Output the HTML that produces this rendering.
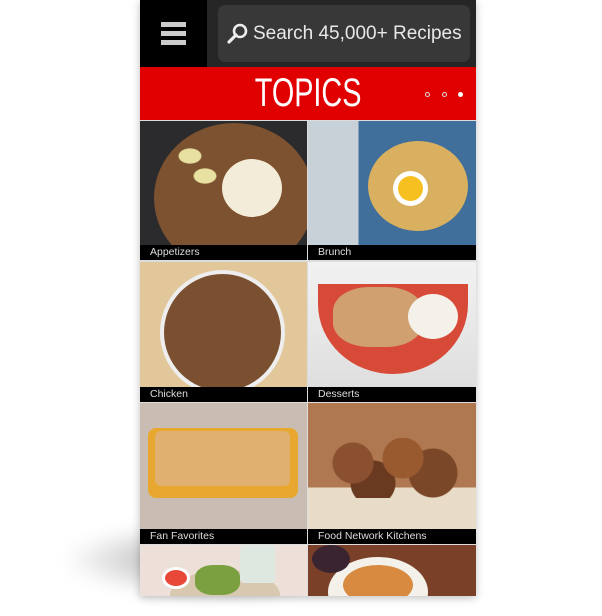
<!DOCTYPE html>
<html><head><style>
*{margin:0;padding:0;box-sizing:border-box}
body{width:602px;height:616px;background:#fff;position:relative;overflow:hidden;font-family:"Liberation Sans",sans-serif}
.shadow{position:absolute;left:60px;top:520px;width:260px;height:80px;border-radius:50%;background:radial-gradient(ellipse at 70% 50%,rgba(0,0,0,.45),rgba(0,0,0,0) 70%);filter:blur(8px)}
.screen{position:absolute;left:140px;top:0;width:336px;height:596px;background:#ddd;overflow:hidden;box-shadow:0 2px 8px rgba(0,0,0,.25)}
.hdr{position:absolute;left:0;top:0;width:336px;height:67px;background:#262626}
.ham{position:absolute;left:0;top:0;width:67px;height:67px;background:#000}
.ham i{position:absolute;left:21px;width:25px;height:5px;background:#ccc}
.search{position:absolute;left:78px;top:5px;width:252px;height:57px;border-radius:7px;background:#383838;color:#e8e8e8;font-size:19px;line-height:57px;padding-left:35px}
.red{position:absolute;left:0;top:67px;width:336px;height:53px;background:#e10000;text-align:center;color:#fff;font-family:"Liberation Sans Narrow","Liberation Sans",sans-serif;font-size:40px;line-height:53px}
.red span{display:inline-block;transform:scaleX(.72)}
.dot{position:absolute;top:92px;width:5px;height:5px;border-radius:50%}
.tile{position:absolute;width:167px;overflow:hidden}
.lab{position:absolute;left:0;bottom:0;width:100%;height:15px;background:#000;color:#ddd;font-size:10.5px;line-height:15px;padding-left:10px}
</style></head><body>
<div class="shadow"></div>
<div class="screen">
<div class="hdr"></div>
<div class="ham"><i style="top:22px"></i><i style="top:31px"></i><i style="top:40px"></i></div>
<div class="search">Search 45,000+ Recipes
<svg style="position:absolute;left:9px;top:18px" width="22" height="22" viewBox="0 0 22 22"><circle cx="13" cy="8" r="6" fill="none" stroke="#eee" stroke-width="2.6"/><line x1="9" y1="12" x2="2" y2="19" stroke="#eee" stroke-width="3.2" stroke-linecap="round"/></svg></div>
<div class="red"><span>TOPICS</span></div>
<div class="dot" style="left:285px;border:1px solid #ddd"></div>
<div class="dot" style="left:302px;border:1px solid #ddd"></div>
<div class="dot" style="left:318px;background:#fff"></div>

<div class="tile" style="left:0;top:121px;height:139px;background:#2b2b2d">
<div style="position:absolute;left:14px;top:2px;width:160px;height:150px;border-radius:50%;background:#7d5230"></div>
<div style="position:absolute;left:82px;top:38px;width:60px;height:58px;border-radius:50%;background:#f2ecd8"></div>
<div style="position:absolute;left:30px;top:15px;width:50px;height:60px;background:radial-gradient(ellipse 12px 8px at 20px 20px,#e8e0a0 90%,transparent),radial-gradient(ellipse 12px 8px at 35px 40px,#e8e0a0 90%,transparent)"></div>
<div class="lab">Appetizers</div></div>
<div class="tile" style="left:168px;top:121px;height:139px;width:168px;background:linear-gradient(90deg,#c8d0d8 0 30%,#3f6f9a 30%)">
<div style="position:absolute;left:60px;top:20px;width:100px;height:90px;border-radius:50%;background:#d8b060"></div>
<div style="position:absolute;left:90px;top:55px;width:25px;height:25px;border-radius:50%;background:#f6c020;box-shadow:0 0 0 5px #fff"></div>
<div class="lab">Brunch</div></div>

<div class="tile" style="left:0;top:262px;height:140px;background:#e2c79a">
<div style="position:absolute;left:20px;top:8px;width:125px;height:125px;border-radius:50%;background:#7a5030;border:4px solid #eee"></div>
<div class="lab">Chicken</div></div>
<div class="tile" style="left:168px;top:262px;height:140px;width:168px;background:linear-gradient(#f2f2f2,#dcdcdc)">
<div style="position:absolute;left:10px;top:22px;width:150px;height:90px;border-radius:0 0 75px 75px/0 0 70px 70px;background:#d84a38"></div>
<div style="position:absolute;left:25px;top:25px;width:90px;height:60px;border-radius:40%;background:#d0a070"></div>
<div style="position:absolute;left:100px;top:32px;width:50px;height:45px;border-radius:50%;background:#f4f0ea"></div>
<div class="lab">Desserts</div></div>

<div class="tile" style="left:0;top:403px;height:141px;background:#c9bdb3">
<div style="position:absolute;left:8px;top:25px;width:150px;height:70px;border-radius:8px;background:#e8a830"></div>
<div style="position:absolute;left:15px;top:28px;width:135px;height:55px;border-radius:6px;background:#e0b070"></div>
<div class="lab">Fan Favorites</div></div>
<div class="tile" style="left:168px;top:403px;height:141px;width:168px;background:linear-gradient(#b07850 0 60%,#e8dcc8 60%)">
<div style="position:absolute;left:0;top:35px;width:168px;height:60px;background:radial-gradient(circle at 45px 25px,#8a5030 20px,transparent 21px),radial-gradient(circle at 95px 20px,#9a5a30 20px,transparent 21px),radial-gradient(circle at 125px 35px,#7a4828 24px,transparent 25px),radial-gradient(circle at 65px 45px,#6a3a20 22px,transparent 23px)"></div>
<div class="lab">Food Network Kitchens</div></div>

<div class="tile" style="left:0;top:545px;height:51px;background:#ede0d8">
<div style="position:absolute;left:30px;top:25px;width:110px;height:50px;border-radius:50%;background:#d8c8b0"></div>
<div style="position:absolute;left:55px;top:20px;width:45px;height:30px;border-radius:40%;background:#7aa040"></div>
<div style="position:absolute;left:22px;top:22px;width:28px;height:22px;border-radius:50%;background:#e84838;border:3px solid #fff"></div>
<div style="position:absolute;left:100px;top:0;width:35px;height:38px;background:#dfe8e0;border-radius:4px"></div></div>
<div class="tile" style="left:168px;top:545px;height:51px;width:168px;background:#7a4028">
<div style="position:absolute;left:20px;top:12px;width:100px;height:70px;border-radius:50%;background:#f4f0ea"></div>
<div style="position:absolute;left:35px;top:20px;width:70px;height:40px;border-radius:50%;background:#d88a40"></div>
<div style="position:absolute;left:4px;top:0;width:38px;height:28px;border-radius:50%;background:#3a2430"></div></div>
</div>
</body></html>
